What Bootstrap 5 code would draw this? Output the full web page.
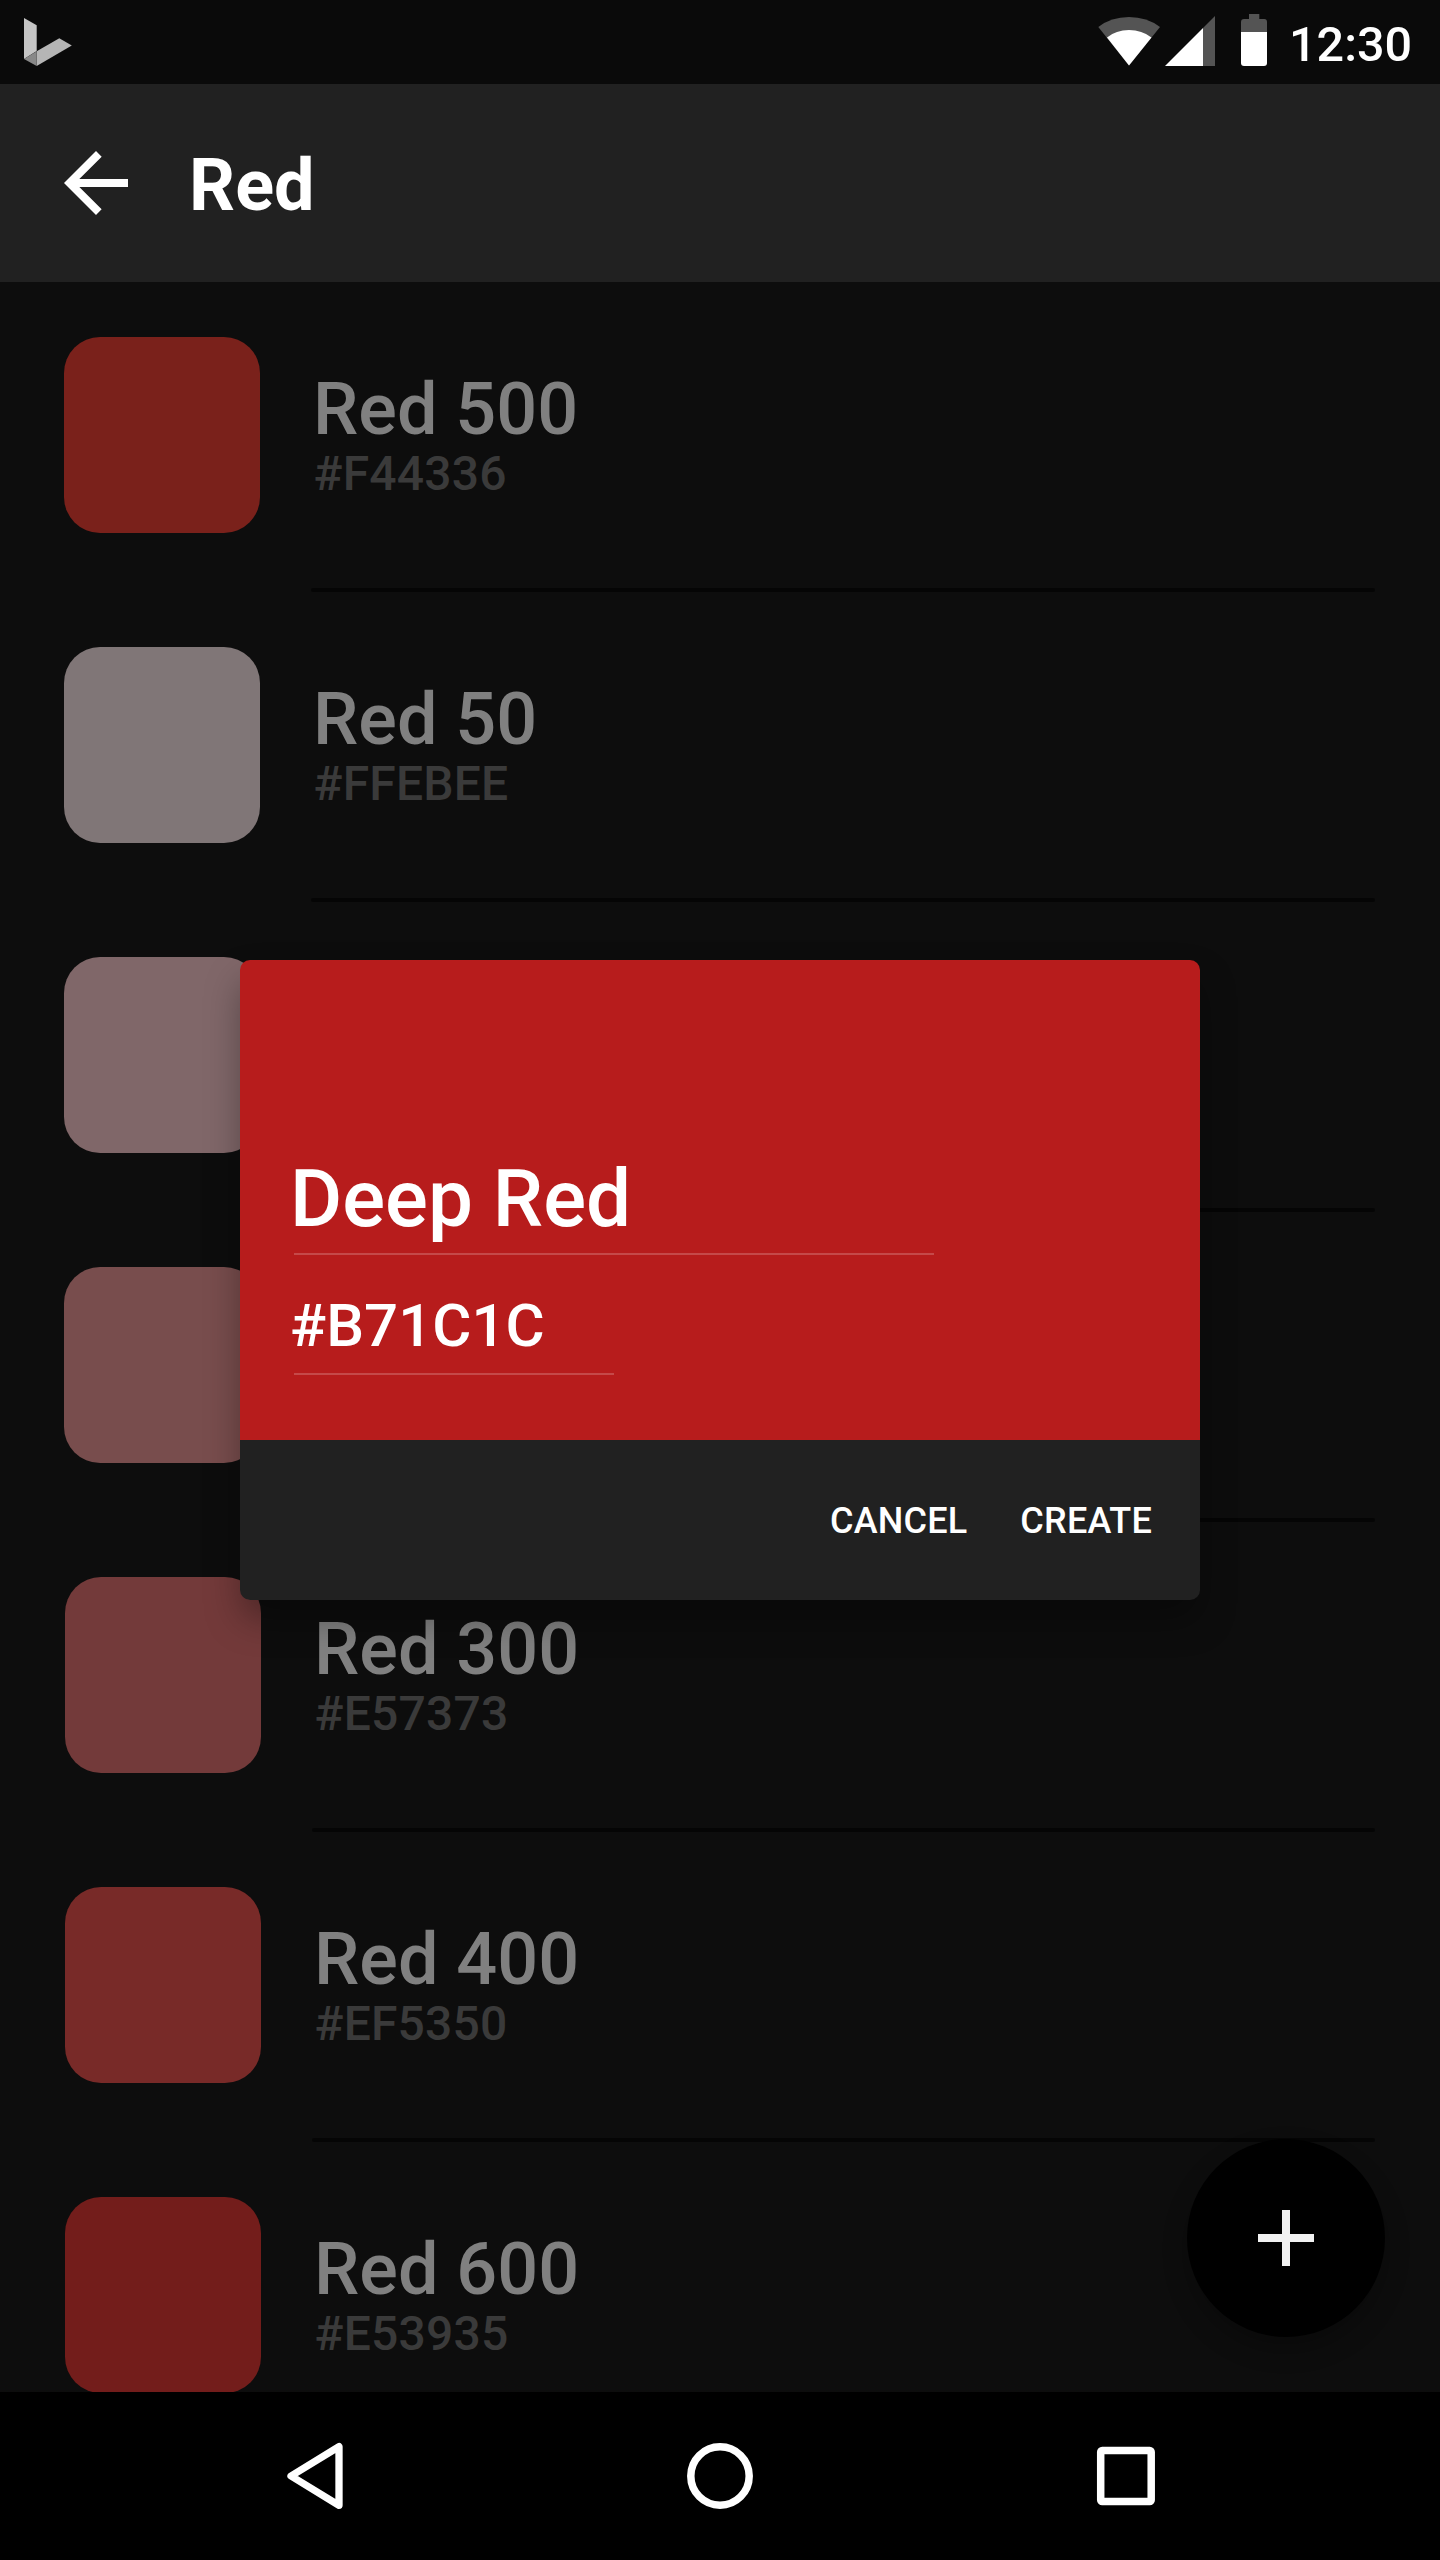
<!DOCTYPE html>
<html lang="en" data-bs-theme="dark">
<head>
<meta charset="utf-8">
<meta name="viewport" content="width=device-width, initial-scale=1">
<title>Red</title>
<link href="https://cdn.jsdelivr.net/npm/bootstrap@5.3.0/dist/css/bootstrap.min.css" rel="stylesheet">
<style>
body { font-family: Roboto, sans-serif; font-weight: 500; background: #0d0d0d; color: #fff; }
svg { display: block; flex: none; }
.phone { width: 1440px; height: 2560px; }
.status-bar { height: 84px; background: #0a0a0a; padding: 0 28px 0 24px; }
.clock { font-size: 48.500px; line-height: 84px; height: 84px; padding-top: 3px; width: 123px; margin-left: 20px; }
.app-bar { height: 198px; background: #212121; padding: 0 48px; }
.app-title { font-size: 72px; line-height: 84px; margin: 6px 0 0 45px; }
.shade-row { height: 310px; padding-left: 64px; }
.shade-row.nudged { padding-left: 65px; }
.swatch { width: 196px; height: 196px; margin-top: 55px; border-radius: 36px; flex: none; }
.shade-text { width: 1064px; margin-left: 51px; padding-top: 92px; }
.shade-row.nudged .shade-text { width: 1063px; }
.shade-name { font-size: 72px; line-height: 72px; color: #808080; padding-left: 2px; }
.shade-hex { font-size: 48px; line-height: 56px; letter-spacing: .2px; color: #3a3a3a; padding-left: 2.500px; }
.rule-line { height: 4px; border-radius: 2px; background: #050505; }
.nav-keys { height: 168px; background: #000; padding: 0 285px; }
.create-dialog { left: 240px; top: 960px; width: 960px; height: 640px; border-radius: 10px; box-shadow: 0 20px 36px -2px rgba(0,0,0,.35); z-index: 2; }
.dialog-face { height: 480px; background: #b71c1c; border-radius: 10px 10px 0 0; padding: 194px 54px 0; }
.field-line { border-bottom: 2px solid rgba(255,255,255,.2); }
.field-name { width: 640px; height: 101px; font-size: 80px; line-height: 90px; }
.field-hex { width: 320px; height: 120px; font-size: 60px; line-height: 70px; padding-top: 36px; }
.field-line span { margin-left: -4px; }
.dialog-foot { height: 160px; background: #212121; border-radius: 0 0 10px 10px; padding-right: 48px; gap: 53px; }
.dialog-foot .btn { font-size: 36px; line-height: 42px; letter-spacing: .2px; font-weight: 500; color: #fff; border: 0; border-radius: 0; padding: 2px 0 0; }
.fab { left: 1187px; top: 2139px; width: 198px; height: 198px; background: #000; box-shadow: 0 12px 24px rgba(0,0,0,.25); z-index: 1; border: 0; }
</style>
</head>
<body>
<div class="phone position-relative overflow-hidden d-flex flex-column">
  <header class="status-bar d-flex flex-shrink-0">
    <svg class="me-auto" width="48" height="84" viewBox="24 0 48 84">
      <path fill="#c5c5c5" d="M24 18l12.7 7.3V51L24 59z"/>
      <path fill="#b5b5b5" d="M36.7 51.3l22.6-13 12.5 7.1L36.7 66z"/>
      <path fill="#888" d="M24 59l12.7-7.7V66z"/>
    </svg>
    <svg width="172" height="84" viewBox="1097 0 172 84">
      <path fill="#545454" d="M1098.3 27Q1111 17 1129 17T1160 27L1129 65.5z"/>
      <path fill="#fff" d="M1107 37.5Q1116 30 1129 30T1151.500 37.500L1129 65.500z"/>
      <path fill="#545454" d="M1215 16v50h-12V28z"/>
      <path fill="#fff" d="M1203 28v38h-38z"/>
      <path fill="#545454" d="M1249 14h10.300v5h5q2.700 0 2.700 3v10h-26V22q0-3 3-3h5z"/>
      <path fill="#fff" d="M1241 32h26v31q0 3-3 3h-20q-3 0-3-3z"/>
    </svg>
    <div class="clock">12:30</div>
  </header>

  <nav class="app-bar d-flex align-items-center flex-shrink-0">
    <svg width="96" height="96" viewBox="0 0 24 24"><path fill="#fff" d="M20 11H7.830l5.590-5.590L12 4l-8 8 8 8 1.410-1.410L7.830 13H20v-2z"/></svg>
    <h1 class="app-title fw-bold">Red</h1>
  </nav>

  <main class="flex-grow-1 overflow-hidden">
    <div class="shade-row d-flex">
      <div class="swatch" style="background:#7a211b"></div>
      <div class="shade-text d-flex flex-column"><div class="shade-name">Red 500</div><div class="shade-hex">#F44336</div><div class="rule-line mt-auto"></div></div>
    </div>
    <div class="shade-row d-flex">
      <div class="swatch" style="background:#807677"></div>
      <div class="shade-text d-flex flex-column"><div class="shade-name">Red 50</div><div class="shade-hex">#FFEBEE</div><div class="rule-line mt-auto"></div></div>
    </div>
    <div class="shade-row d-flex">
      <div class="swatch" style="background:#806769"></div>
      <div class="shade-text d-flex flex-column"><div class="rule-line mt-auto"></div></div>
    </div>
    <div class="shade-row d-flex">
      <div class="swatch" style="background:#784d4d"></div>
      <div class="shade-text d-flex flex-column"><div class="rule-line mt-auto"></div></div>
    </div>
    <div class="shade-row nudged d-flex">
      <div class="swatch" style="background:#733a3a"></div>
      <div class="shade-text d-flex flex-column"><div class="shade-name">Red 300</div><div class="shade-hex">#E57373</div><div class="rule-line mt-auto"></div></div>
    </div>
    <div class="shade-row nudged d-flex">
      <div class="swatch" style="background:#782a28"></div>
      <div class="shade-text d-flex flex-column"><div class="shade-name">Red 400</div><div class="shade-hex">#EF5350</div><div class="rule-line mt-auto"></div></div>
    </div>
    <div class="shade-row nudged d-flex">
      <div class="swatch" style="background:#731d1b"></div>
      <div class="shade-text d-flex flex-column"><div class="shade-name">Red 600</div><div class="shade-hex">#E53935</div></div>
    </div>
  </main>

  <footer class="nav-keys d-flex align-items-center justify-content-between flex-shrink-0">
    <svg width="60" height="72" viewBox="285 2440 60 72"><path fill="none" stroke="#fff" stroke-width="7.300" stroke-linejoin="round" d="M339 2446.700v58.600L291 2476z"/></svg>
    <svg width="72" height="72" viewBox="0 0 72 72"><circle cx="36" cy="36" r="29.200" fill="none" stroke="#fff" stroke-width="7.500"/></svg>
    <svg width="60" height="72" viewBox="0 0 60 72"><rect x="5.700" y="10.500" width="50.500" height="51" rx="1.500" fill="none" stroke="#fff" stroke-width="7.500"/></svg>
  </footer>

  <button class="fab position-absolute rounded-circle d-flex align-items-center justify-content-center p-0" aria-label="Add">
    <svg width="56" height="56" viewBox="0 0 56 56"><path fill="#f2f2f2" d="M24 0h8v24h24v8H32v24h-8V32H0v-8h24z"/></svg>
  </button>

  <section class="create-dialog position-absolute" role="dialog">
    <div class="dialog-face">
      <div class="field-line field-name"><span>Deep Red</span></div>
      <div class="field-line field-hex"><span>#B71C1C</span></div>
    </div>
    <div class="dialog-foot d-flex align-items-center justify-content-end">
      <button class="btn">CANCEL</button>
      <button class="btn">CREATE</button>
    </div>
  </section>
</div>
<script src="https://cdn.jsdelivr.net/npm/bootstrap@5.3.0/dist/js/bootstrap.bundle.min.js"></script>
</body>
</html>
